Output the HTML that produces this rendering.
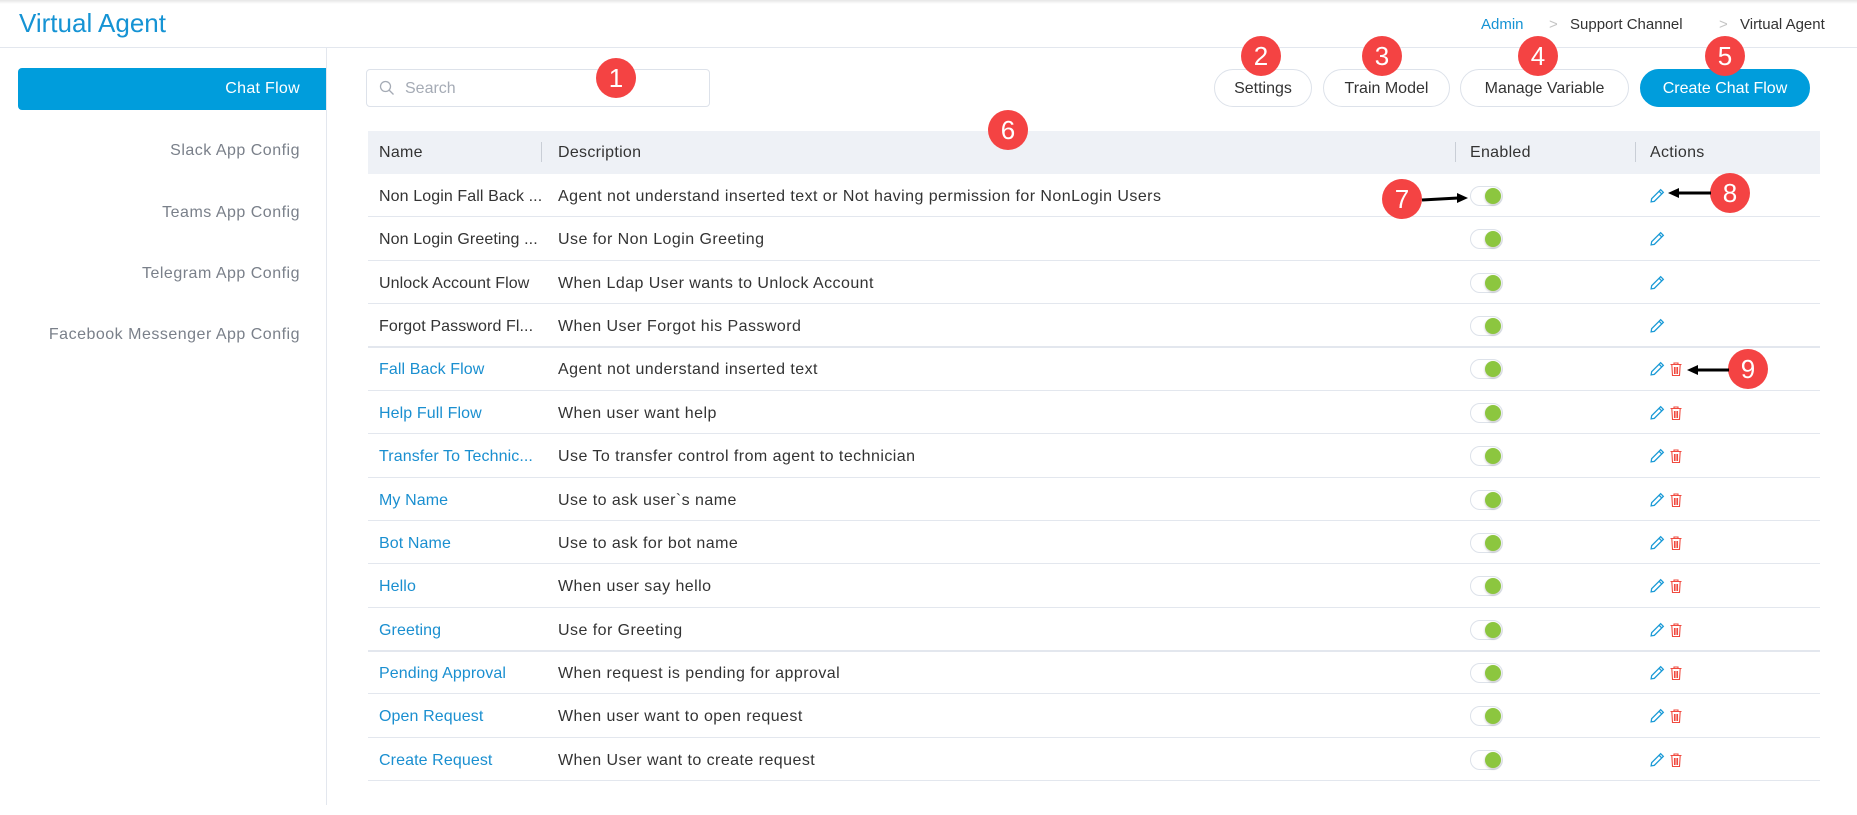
<!DOCTYPE html>
<html><head><meta charset="utf-8"><style>
*{box-sizing:border-box;margin:0;padding:0}
body{width:1857px;height:815px;background:#fff;font-family:"Liberation Sans",sans-serif;position:relative;overflow:hidden;color:#333}
.a{position:absolute}
.title{left:19px;top:8px;font-size:26px;color:#1593d4}
.hl{left:0;top:47px;width:1857px;height:1px;background:#e3e7ee}
.topsh{left:0;top:0;width:1857px;height:4px;background:linear-gradient(#e6e6e6,#fff)}
.bc{top:16px;font-size:15px;color:#333}
.side{left:326px;top:48px;width:1px;height:757px;background:#e3e7ee}
.cf{left:18px;top:68px;width:308px;height:42px;background:#009ddc;color:#fff;border-radius:4px 0 0 4px;font-size:16px;text-align:right;padding:12px 26px 0 0;letter-spacing:.3px}
.si{right:1557px;font-size:16px;color:#7a808a;text-align:right;white-space:nowrap;letter-spacing:.5px}
.search{left:366px;top:69px;width:344px;height:38px;border:1px solid #dde2ea;border-radius:4px;font-size:16px;color:#a5abb5;padding:10px 0 0 38px}
.btn{top:69px;height:38px;border:1px solid #dde2ea;border-radius:19px;font-size:16px;color:#333;text-align:center;padding-top:10px;background:#fff}
.th{left:368px;top:131px;width:1452px;height:43px;background:#eef1f6}
.tht{top:144px;font-size:16px;color:#333;letter-spacing:.3px}
.sep{top:142px;width:1px;height:20px;background:#c9ced6}
.row{left:368px;width:1452px;height:1px;background:#e3e7ee}
.cell{font-size:16px;white-space:nowrap;letter-spacing:.45px}
.tg{width:33px;height:20px;border:1px solid #dde2ea;border-radius:10px;background:#fff}
.tg:after{content:"";position:absolute;right:1px;top:1px;width:16px;height:16px;border-radius:50%;background:#8cc63f;box-shadow:0 1px 2px rgba(0,0,0,.25)}
.bd{width:40px;height:40px;border-radius:50%;background:#f44343;color:#fff;font-size:26px;text-align:center;line-height:40px}
</style></head><body>
<div class="a topsh"></div>
<div class="a title">Virtual Agent</div>
<div class="a bc" style="left:1481px;color:#1593d4">Admin</div>
<div class="a bc" style="left:1549px;color:#c4c4c4">&gt;</div>
<div class="a bc" style="left:1570px">Support Channel</div>
<div class="a bc" style="left:1719px;color:#c4c4c4">&gt;</div>
<div class="a bc" style="left:1740px">Virtual Agent</div>
<div class="a hl"></div>
<div class="a side"></div>
<div class="a cf">Chat Flow</div>
<div class="a si" style="top:142px">Slack App Config</div>
<div class="a si" style="top:204px">Teams App Config</div>
<div class="a si" style="top:265px">Telegram App Config</div>
<div class="a si" style="top:326px">Facebook Messenger App Config</div>
<div class="a search">Search</div>
<svg class="a" style="left:379px;top:80px" width="16" height="16" viewBox="0 0 16 16"><circle cx="6.5" cy="6.5" r="5" fill="none" stroke="#a5abb5" stroke-width="1.3"/><path d="M10 10l4.5 4.5" stroke="#a5abb5" stroke-width="1.3"/></svg>
<div class="a btn" style="left:1214px;width:98px">Settings</div>
<div class="a btn" style="left:1323px;width:127px">Train Model</div>
<div class="a btn" style="left:1460px;width:169px">Manage Variable</div>
<div class="a btn" style="left:1640px;width:170px;background:#009ddc;border-color:#009ddc;color:#fff">Create Chat Flow</div>
<div class="a th"></div>
<div class="a tht" style="left:379px">Name</div>
<div class="a sep" style="left:541px"></div>
<div class="a tht" style="left:558px">Description</div>
<div class="a sep" style="left:1455px"></div>
<div class="a tht" style="left:1470px">Enabled</div>
<div class="a sep" style="left:1635px"></div>
<div class="a tht" style="left:1650px">Actions</div>
<div id="rows"></div>
<script>
var d=[["Non Login Fall Back ...","Agent not understand inserted text or Not having permission for NonLogin Users",0],
["Non Login Greeting ...","Use for Non Login Greeting",0],
["Unlock Account Flow","When Ldap User wants to Unlock Account",0],
["Forgot Password Fl...","When User Forgot his Password",0],
["Fall Back Flow","Agent not understand inserted text",1],
["Help Full Flow","When user want help",1],
["Transfer To Technic...","Use To transfer control from agent to technician",1],
["My Name","Use to ask user`s name",1],
["Bot Name","Use to ask for bot name",1],
["Hello","When user say hello",1],
["Greeting","Use for Greeting",1],
["Pending Approval","When request is pending for approval",1],
["Open Request","When user want to open request",1],
["Create Request","When User want to create request",1]];
var h="",rh=43.36;
var pen='<svg width="17" height="17" viewBox="0 0 16 16"><path d="M11 2.5l2.5 2.5L5 13.5l-3 .5.5-3z M9.5 4l2.5 2.5" fill="none" stroke="#1a9ad6" stroke-width="1.2"/></svg>';
var tr='<svg width="14" height="16" viewBox="0 0 14 16"><path d="M1.5 3.5h11M5 3.5V2h4v1.5M2.8 3.5l.7 11h7l.7-11M5.5 6v7M7 6v7M8.5 6v7" fill="none" stroke="#f0493e" stroke-width="1.1"/></svg>';
for(var i=0;i<14;i++){var y=174+i*rh;
h+='<div class="a cell" style="left:379px;top:'+(y+14)+'px;letter-spacing:.1px;color:'+(d[i][2]?'#1a8fd0':'#333')+'">'+d[i][0]+'</div>';
h+='<div class="a cell" style="left:558px;top:'+(y+14)+'px">'+d[i][1]+'</div>';
h+='<div class="a tg" style="left:1470px;top:'+(y+12)+'px"></div>';
h+='<div class="a" style="left:1649px;top:'+(y+13)+'px">'+pen+'</div>';
if(d[i][2])h+='<div class="a" style="left:1669px;top:'+(y+14)+'px">'+tr+'</div>';
h+='<div class="a row" style="top:'+Math.round(y+rh-1)+'px;'+((i==3||i==10)?'height:2px;':'')+'"></div>';}
document.getElementById('rows').innerHTML=h;
</script>
<div class="a bd" style="left:596px;top:58px">1</div>
<div class="a bd" style="left:1241px;top:36px">2</div>
<div class="a bd" style="left:1362px;top:36px">3</div>
<div class="a bd" style="left:1518px;top:36px">4</div>
<div class="a bd" style="left:1705px;top:36px">5</div>
<div class="a bd" style="left:988px;top:110px">6</div>
<div class="a bd" style="left:1382px;top:179px">7</div>
<div class="a bd" style="left:1710px;top:173px">8</div>
<div class="a bd" style="left:1728px;top:349px">9</div>
<svg class="a" style="left:0;top:0" width="1857" height="815">
<path d="M1422 200L1458 198" stroke="#000" stroke-width="3"/><path d="M1468 198l-11-5v10z" fill="#000"/>
<path d="M1711 193H1678" stroke="#000" stroke-width="3"/><path d="M1668 193l11-5v10z" fill="#000"/>
<path d="M1729 370H1697" stroke="#000" stroke-width="3"/><path d="M1687 370l11-5v10z" fill="#000"/>
</svg>
</body></html>
